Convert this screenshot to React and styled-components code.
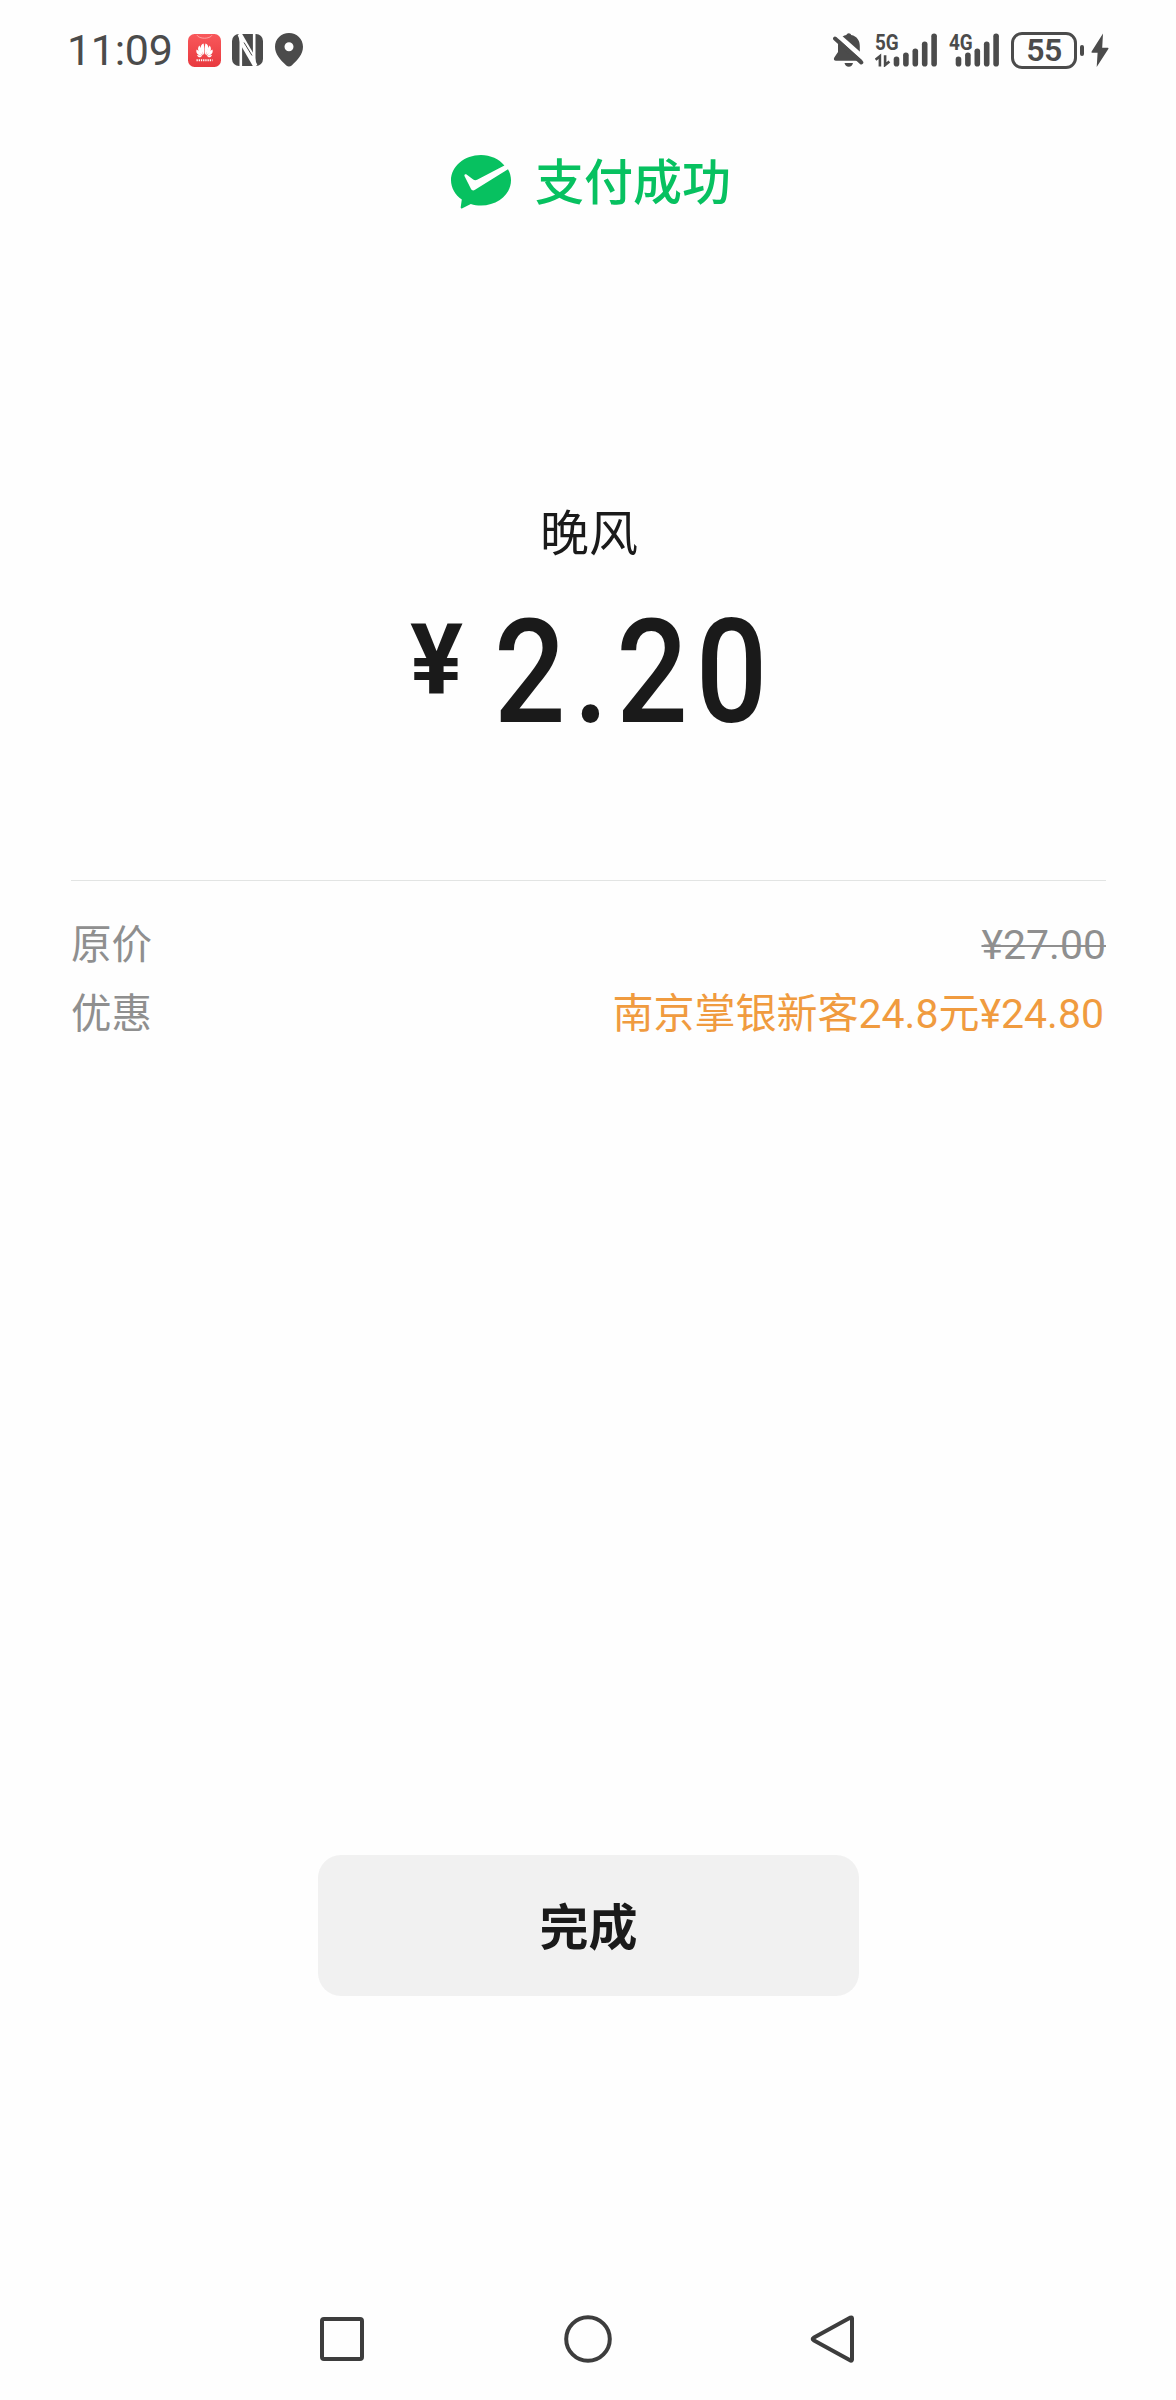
import React from "react";
import styled, { createGlobalStyle } from "styled-components";

const cjk = `"Noto Sans CJK SC", "Noto Sans", sans-serif`;
const latin = `Roboto, "Noto Sans CJK SC", sans-serif`;
const ink = "#4b4b4b";

const GlobalStyle = createGlobalStyle`
  *, *::before, *::after { box-sizing: border-box; }
  body { margin: 0; background: #fefefe; }
`;

const Screen = styled.div`
  display: flex;
  flex-direction: column;
  width: 1176px;
  height: 2400px;
  background: #fefefe;
  color: #1a1a1a;
  font-family: ${cjk};
  overflow: hidden;
`;

const StatusBar = styled.header`
  display: flex;
  align-items: center;
  justify-content: space-between;
  height: 100px;
  padding: 0 67px 0 67px;
  color: ${ink};
  font-family: ${latin};
`;

const StatusGroup = styled.div`
  display: flex;
  align-items: center;
`;

const Clock = styled.time`
  width: 121px;
  font-size: 43px;
  line-height: 50px;
  letter-spacing: -0.3px;
  white-space: nowrap;
`;

const Icon = styled.svg`
  display: block;
  flex: none;
  margin-left: ${(p) => p.$gap || 0}px;
`;

const Signal = styled.div`
  position: relative;
  width: ${(p) => p.$width}px;
  height: 34px;
  margin-left: ${(p) => p.$gap}px;
`;

const NetworkLabel = styled.span`
  position: absolute;
  left: 0;
  top: 0;
  font-size: 22.5px;
  line-height: 18px;
  font-weight: 700;
  letter-spacing: 0;
  transform: scaleX(0.84);
  transform-origin: left;
`;

const Battery = styled.div`
  display: flex;
  align-items: center;
  justify-content: center;
  width: 66px;
  height: 37px;
  margin-left: 12px;
  border: 3px solid ${ink};
  border-radius: 11px;
  font-size: 32px;
  line-height: 31px;
  font-weight: 600;
  letter-spacing: -0.5px;
`;

const BatteryCap = styled.div`
  width: 4px;
  height: 11px;
  margin-left: 3px;
  border-radius: 2px;
  background: ${ink};
`;

const ResultHeader = styled.div`
  display: flex;
  align-items: center;
  justify-content: center;
  gap: 24px;
  height: 60px;
  margin-top: 50px;
  padding-left: 6px;
  color: #07c160;
`;

const ResultTitle = styled.h1`
  margin: 0 0 2px;
  font-size: 49px;
  line-height: 60px;
  font-weight: 500;
`;

const Payee = styled.div`
  margin-top: 290px;
  padding-left: 2px;
  font-size: 49px;
  line-height: 60px;
  text-align: center;
`;

const Amount = styled.div`
  display: flex;
  align-items: flex-start;
  height: 144px;
  margin-top: 41px;
  padding-left: 410px;
  font-family: ${latin};
`;

const Currency = styled.span`
  width: 84px;
  padding-top: 10px;
  font-size: 99px;
  line-height: 99px;
  font-weight: 700;
`;

const AmountValue = styled.span`
  font-size: 144px;
  line-height: 144px;
  font-weight: 500;
  letter-spacing: 9px;
  white-space: nowrap;
  transform: scaleX(0.875);
  transform-origin: left;
`;

const Details = styled.section`
  margin: 135px 70px 0 71px;
  padding-top: 27px;
  border-top: 1px solid #e2e4e3;
`;

const DetailRow = styled.div`
  display: flex;
  align-items: baseline;
  justify-content: space-between;
  height: 69px;
  line-height: 68px;
  font-size: 40.5px;
  color: #8f8f8f;
`;

const DetailValue = styled.span`
  padding-right: ${(p) => (p.$discount ? 2 : 0)}px;
  font-family: ${latin};
  font-size: 41px;
  color: ${(p) => (p.$discount ? "#f09b3f" : "inherit")};
  text-decoration: ${(p) => (p.$struck ? "line-through 2px" : "none")};
`;

const DoneButton = styled.button`
  align-self: center;
  width: 541px;
  height: 141px;
  margin-top: 809px;
  padding: 0 0 3px 1px;
  border: 0;
  border-radius: 23px;
  background: #f1f1f1;
  color: #1a1a1a;
  font-family: ${cjk};
  font-size: 49px;
  line-height: 60px;
  font-weight: 700;
`;

const NavBar = styled.nav`
  display: flex;
  align-items: center;
  justify-content: space-between;
  height: 48px;
  margin-top: auto;
  margin-bottom: 37px;
  padding: 0 319px 0 318px;
`;

const BARS = [10, 14, 18, 25, 33];

function SignalBars({ start }) {
  return BARS.map((h, i) => (
    <rect key={h} x={start + i * 9.4} y={33.5 - h} width="5.6" height={h} rx="2.8" fill={ink} />
  ));
}

function StoreIcon() {
  return (
    <Icon width="33" height="33" viewBox="0 0 33 33">
      <defs>
        <linearGradient id="store" x1="0" y1="0" x2="0" y2="1">
          <stop offset="0" stopColor="#f9585b" />
          <stop offset="1" stopColor="#e8393f" />
        </linearGradient>
      </defs>
      <rect width="33" height="33" rx="6.5" fill="url(#store)" />
      <path d="M9 1.2C11 5.2 22 5.2 24 1.2" fill="none" stroke="#ffa3a3" strokeWidth="1" />
      <g fill="#fff">
        <path d="M16 21C11.500 15 12 10.500 15.600 9.500C16.500 13 16.400 17 16 21Z" />
        <path d="M17 21C21.500 15 21 10.500 17.400 9.500C16.500 13 16.600 17 17 21Z" />
        <path d="M15 21.300C9.800 18.500 9 14.500 11.300 11.600C13.500 14.500 14.800 18 15 21.300Z" />
        <path d="M18 21.300C23.200 18.500 24 14.500 21.700 11.600C19.500 14.500 18.200 18 18 21.300Z" />
        <path d="M14.300 22C9.500 21.500 7.500 18.700 8.600 15.500C11.300 17 13.300 19.500 14.300 22Z" />
        <path d="M18.700 22C23.500 21.500 25.500 18.700 24.400 15.500C21.700 17 19.700 19.500 18.700 22Z" />
        <path d="M14 22.800C11.500 23.700 9.700 23 9 20.900C11 21 12.700 21.700 14 22.800Z" />
        <path d="M19 22.800C21.500 23.700 23.300 23 24 20.900C22 21 20.300 21.700 19 22.800Z" />
      </g>
      <path d="M8.500 26.300H24.500" stroke="#fff" strokeWidth="1.900" strokeDasharray="1.300 0.900" />
    </Icon>
  );
}

function NfcIcon() {
  return (
    <Icon $gap={11} width="31" height="32" viewBox="0 0 31 32">
      <rect width="31" height="32" rx="7" fill={ink} />
      <g fill="none" stroke="#fefefe" strokeWidth="2.600">
        <path d="M6.800 0.500C8.400 3 8.800 5 8.800 8V32" />
        <path d="M24.200 31.500C22.600 29 22.200 27 22.200 24V0" />
      </g>
      <path d="M6.500 0H10.200L22.600 21.500V27L9.500 8Z" fill="#fefefe" />
      <path d="M24.500 32H20.800L8.400 10.500V5L21.500 24Z" fill="#fefefe" />
      <path d="M12 8.500L20 21.500" stroke={ink} strokeWidth="1" />
    </Icon>
  );
}

function PinIcon() {
  return (
    <Icon $gap={12} width="28" height="34" viewBox="0 0 28 34">
      <path
        fillRule="evenodd"
        fill={ink}
        d="M14 0C6.200 0 0 6 0 13.800C0 21.300 5.200 27 11.300 32.400C13 33.800 15 33.800 16.700 32.400C22.800 27 28 21.300 28 13.800C28 6 21.800 0 14 0ZM14 9.300A4.500 4.500 0 1 1 14 18.300A4.500 4.500 0 1 1 14 9.300Z"
      />
    </Icon>
  );
}

function MutedBellIcon() {
  return (
    <Icon width="31" height="34" viewBox="0 0 31 34">
      <path
        d="M15.800 0.300C14.600 0.300 13.800 1 13.400 2.100C7.500 3.400 5 7.600 5 13V19L1.300 24.500C0.300 26.200 1 27.700 3 27.700H28.600C30 27.700 30.600 26.300 29.800 25L26.800 19.500V13C26.800 7.600 24 3.400 18.200 2.100C17.800 1 17 0.300 15.800 0.300Z"
        fill={ink}
      />
      <path d="M11.500 30H20C19.500 32.400 18 33.700 15.800 33.700C13.500 33.700 12 32.400 11.500 30Z" fill={ink} />
      <path d="M4.500 2L32 26.500" stroke="#fefefe" strokeWidth="5" />
      <path d="M2 5.500L28.300 29.500" stroke={ink} strokeWidth="4" strokeLinecap="round" />
    </Icon>
  );
}

function BoltIcon() {
  return (
    <Icon $gap={7} width="18" height="35" viewBox="0 0 18 35">
      <path d="M12 0.600L0.600 18.600Q0 19.800 1.200 19.800H6.600L5.700 34L17.300 16Q18 14.700 16.700 14.700H11.200Z" fill={ink} />
    </Icon>
  );
}

const Bubble = styled.svg`
  display: block;
  flex: none;
  margin-top: 3px;
`;

function SuccessIcon() {
  return (
    <Bubble width="60" height="54" viewBox="0 0 60 54">
      <path
        fill="#07c160"
        d="M30 0C13.400 0 0 11.300 0 25.300C0 33 4.200 40 10.800 44.600L9.700 52.300C9.600 53.500 10.400 53.900 11.400 53.300L19.800 48.900C23 50 26.400 50.600 30 50.600C46.600 50.600 60 39.300 60 25.300C60 21.300 58.900 17.500 57 14.200L24 34.800C22.200 35.900 20.800 35.400 19.900 33.800L13.600 21.300C12.900 19.700 14.300 18.800 15.600 19.600L22.200 24.400C23.600 25.300 24.500 25.400 26.100 24.700L53.400 10.400C48 4.100 39.500 0 30 0Z"
      />
    </Bubble>
  );
}

export default function App() {
  return (
    <>
      <GlobalStyle />
      <Screen>
        <StatusBar>
          <StatusGroup>
            <Clock>11:09</Clock>
            <StoreIcon />
            <NfcIcon />
            <PinIcon />
          </StatusGroup>
          <StatusGroup>
            <MutedBellIcon />
            <Signal $width={62} $gap={11}>
              <NetworkLabel>5G</NetworkLabel>
              <svg width="62" height="34" viewBox="0 0 62 34">
                <g stroke={ink} strokeWidth="2.600" fill="none">
                  <path d="M0.600 26.800L4.900 23.200V33.500" />
                  <path d="M14.400 28.500L10.100 32V22.300" />
                </g>
                <SignalBars start={18.7} />
              </svg>
            </Signal>
            <Signal $width={50} $gap={12}>
              <NetworkLabel>4G</NetworkLabel>
              <svg width="50" height="34" viewBox="0 0 50 34">
                <SignalBars start={6.7} />
              </svg>
            </Signal>
            <Battery>55</Battery>
            <BatteryCap />
            <BoltIcon />
          </StatusGroup>
        </StatusBar>

        <ResultHeader>
          <SuccessIcon />
          <ResultTitle>支付成功</ResultTitle>
        </ResultHeader>

        <Payee>晚风</Payee>
        <Amount>
          <Currency>¥</Currency>
          <AmountValue>2.20</AmountValue>
        </Amount>

        <Details>
          <DetailRow>
            <span>原价</span>
            <DetailValue $struck>¥27.00</DetailValue>
          </DetailRow>
          <DetailRow>
            <span>优惠</span>
            <DetailValue $discount>南京掌银新客24.8元¥24.80</DetailValue>
          </DetailRow>
        </Details>

        <DoneButton type="button">完成</DoneButton>

        <NavBar>
          <svg width="48" height="48" viewBox="0 0 48 48" fill="none" stroke="#3d3d3d" strokeWidth="4">
            <rect x="4" y="4" width="40" height="40" rx="2" />
          </svg>
          <svg width="48" height="48" viewBox="0 0 48 48" fill="none" stroke="#3d3d3d" strokeWidth="4">
            <circle cx="24" cy="24" r="21.800" />
          </svg>
          <svg width="48" height="48" viewBox="0 0 48 48" fill="none" stroke="#3d3d3d" strokeWidth="4" strokeLinejoin="round">
            <path d="M4.600 22.800Q2.800 24 4.600 25.200L41.500 45.600Q43 46 43 44.600V3.400Q43 2 41.500 2.600Z" />
          </svg>
        </NavBar>
      </Screen>
    </>
  );
}
